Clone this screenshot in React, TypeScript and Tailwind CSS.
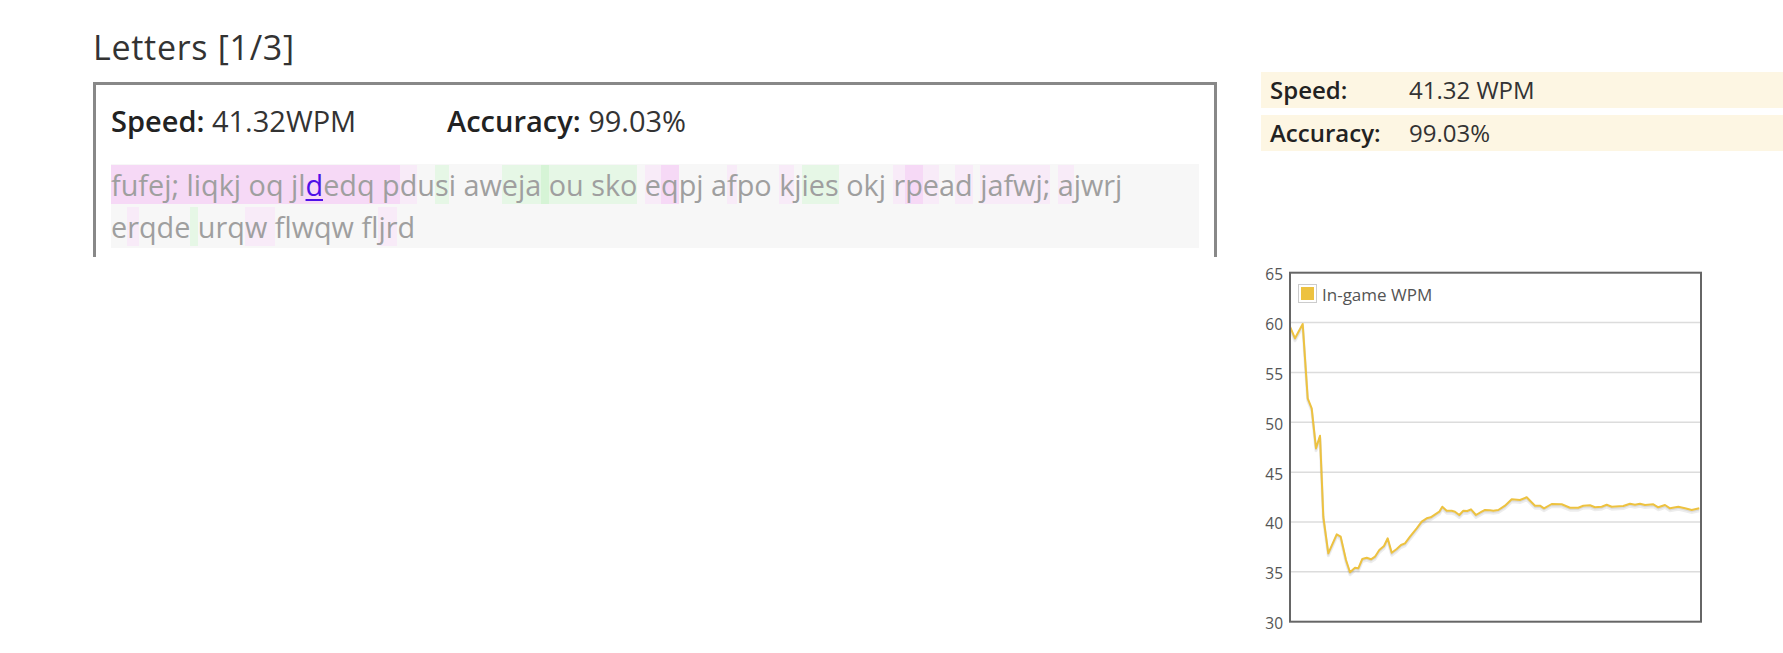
const line1: [string, string][] = [
  ['fufej; liqkj oq jl', 'p2'],
  ['d', 'cur'],
  ['edq p', 'p2'],
  ['d', 'p1'],
  ['u', ''],
  ['s', 'g1'],
  ['i aw', ''],
  ['eja', 'g1'],
  [' ', 'g2'],
  ['ou sko', 'g1'],
  [' ', ''],
  ['e', 'p1'],
  ['q', 'p2'],
  ['pj a', ''],
  ['f', 'p1'],
  ['po ', ''],
  ['k', 'p1'],
  ['j', ''],
  ['ies', 'g1'],
  [' okj ', ''],
  ['r', 'p1'],
  ['p', 'p2'],
  ['e', 'p1'],
  ['a', ''],
  ['d', 'p1'],
  [' ', ''],
  ['jafwj;', 'p1'],
  [' ', ''],
  ['a', 'p1'],
  ['jwrj', ''],
];

const line2: [string, string][] = [
  ['e', ''],
  ['r', 'p1'],
  ['qde', ''],
  [' ', 'g1'],
  ['urq', ''],
  ['w ', 'p1'],
  ['f', ''],
  ['l', 'p1'],
  ['wqw ', ''],
  ['fl', ''],
  ['jr', 'p1'],
  ['d', ''],
];

const tone: Record<string, string> = {
  '': '',
  p1: 'bg-[#f8ebf8]',
  p2: 'bg-[#f6d9f6]',
  g1: 'bg-[#e6f7e6]',
  g2: 'bg-[#d6f4d6]',
  cur: 'bg-[#f6d9f6] text-[#4f10e8] underline decoration-[2px] underline-offset-[3px]',
};

// wpm samples traced from the run, page coords
const wpm: [number, number][] = [
  [1290, 326.7], [1295, 338.3], [1302.7, 324], [1307.7, 398.3], [1311.7, 408.3], [1316, 448.3],
  [1320, 435.7], [1323.3, 516.7], [1328.3, 553.3], [1336.7, 534.3], [1340.7, 536.7], [1346, 560],
  [1350, 572.3], [1355, 567.7], [1358.3, 568.3], [1362.3, 559], [1366.7, 557.7], [1371, 559.3],
  [1375, 556.7], [1379.3, 550], [1384, 546], [1387.7, 538.3], [1391.7, 552.7], [1396.7, 549],
  [1401, 545], [1405, 543.3], [1410, 536.7], [1416.7, 528.3], [1421.7, 521.7], [1426.7, 518.3],
  [1430.7, 517.3], [1436.7, 513.3], [1439.3, 511.7], [1442.3, 506.7], [1446.7, 510.7], [1451.7, 510.7],
  [1455, 511.7], [1459.3, 515], [1463.3, 510.7], [1467.3, 511], [1471, 509.3], [1476, 515],
  [1481.7, 511.7], [1485, 510], [1490, 510.3], [1493.3, 510.7], [1498.3, 510], [1505, 505.7],
  [1511.7, 499.3], [1520, 500], [1526.7, 497.3], [1535, 505.7], [1540, 505.7], [1544, 508.3],
  [1551.7, 504], [1561.7, 504.3], [1570, 507.7], [1578.3, 507.7], [1583.3, 505.7], [1590, 505.3],
  [1595, 507.3], [1601.7, 506.7], [1606.7, 504.7], [1611.7, 506.7], [1623.3, 506], [1630, 503.7],
  [1635, 504.7], [1640, 503.7], [1645, 505], [1653.3, 504.3], [1658.3, 507.3], [1665, 505],
  [1670, 508.3], [1678.3, 506.7], [1685, 508.3], [1691.7, 510], [1699.3, 508.3],
];

function WpmChart() {
  const ox = 1261;
  const oy = 260;
  const left = 29;
  const right = 440;
  const top = 12.7;
  const bottom = 361.7;
  const yOf = (v: number) => top + ((65 - v) * (bottom - top)) / 35;
  const ticks = [65, 60, 55, 50, 45, 40, 35, 30];
  const pts = (dy: number) => wpm.map(([x, y]) => `${x - ox},${y - oy + dy}`).join(' ');

  return (
    <svg width="460" height="380" className="block mt-[109px]">
      {ticks.slice(1, -1).map((t) => (
        <line key={t} x1={left} x2={right} y1={yOf(t)} y2={yOf(t)} stroke="#dcdcdc" strokeWidth="1.5" />
      ))}
      {ticks.map((t) => (
        <text
          key={t}
          x={22}
          y={yOf(t) + 1.5}
          textAnchor="end"
          dominantBaseline="central"
          fontSize="15.5"
          fill="#555"
        >
          {t}
        </text>
      ))}
      <polyline points={pts(2.5)} fill="none" stroke="rgba(0,0,0,0.07)" strokeWidth="3" strokeLinejoin="round" />
      <polyline points={pts(1.2)} fill="none" stroke="rgba(0,0,0,0.08)" strokeWidth="2" strokeLinejoin="round" />
      <polyline points={pts(0)} fill="none" stroke="#edc240" strokeWidth="2" strokeLinejoin="round" />
      <rect x={left} y={top} width={right - left} height={bottom - top} fill="none" stroke="#666" strokeWidth="2" />
      <rect x={37.5} y={24.5} width={18} height={18} fill="#fff" stroke="#ccc" strokeWidth="1" />
      <rect x={40} y={27} width={13} height={13} fill="#edc240" />
      <text x={61} y={40.7} fontSize="17" fill="#545454">
        In-game WPM
      </text>
    </svg>
  );
}

function Chars({ parts }: { parts: [string, string][] }) {
  return (
    <div>
      {parts.map(([t, k], i) => (
        <span key={i} className={tone[k]}>
          {t}
        </span>
      ))}
    </div>
  );
}

export default function App() {
  return (
    <div className="flex w-[1783px] h-[653px] overflow-hidden bg-white pl-[93px] pt-[27px] font-['Open_Sans',sans-serif] text-[#333]">
      <div className="w-[1124px] shrink-0">
        <h1 className="h-[41px] text-[34px] leading-[41px] tracking-[0.7px] text-[#333] mb-[14px]">Letters [1/3]</h1>
        <div className="border-t-[3px] border-x-[3px] border-[#888] px-[15px] pt-[15px] pb-[9px]">
          <div className="flex text-[29px] leading-[42px] text-[#333]">
            <div className="w-[336px]">
              <span className="font-semibold text-[#222]">Speed:</span> 41.32WPM
            </div>
            <div>
              <span className="font-semibold text-[#222]">Accuracy:</span> 99.03%
            </div>
          </div>
          <div className="mt-[22px] bg-[#f7f7f7] text-[28.8px] leading-[42px] text-[#9f9f9f]">
            <Chars parts={line1} />
            <Chars parts={line2} />
          </div>
        </div>
      </div>

      <div className="ml-[44px] flex-1 pt-[45px]">
        <div className="flex flex-col gap-[7px] text-[24px] text-[#333]">
          <div className="flex h-[36px] items-center bg-[#fdf6e3] pl-[9px]">
            <span className="w-[139px] font-semibold text-[#222]">Speed:</span>
            <span>41.32 WPM</span>
          </div>
          <div className="flex h-[36px] items-center bg-[#fdf6e3] pl-[9px]">
            <span className="w-[139px] font-semibold text-[#222]">Accuracy:</span>
            <span>99.03%</span>
          </div>
        </div>
        <WpmChart />
      </div>
    </div>
  );
}
